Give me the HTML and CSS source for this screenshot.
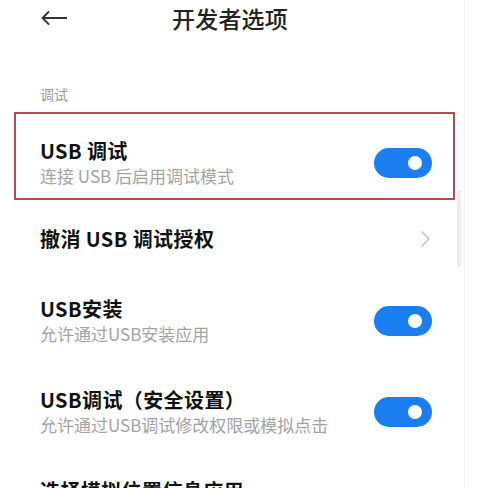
FILE: index.html
```html
<!DOCTYPE html>
<html lang="zh-CN">
<head>
<meta charset="utf-8">
<title>开发者选项</title>
<link rel="stylesheet" href="styles.css">
</head>
<body>
<div class="screen">
  <header class="topbar">
    <svg class="back" width="26" height="14" viewBox="0 0 26 14" aria-hidden="true">
      <path d="M1.5 7 H26 M7.5 1 L1.5 7 L7.5 13" fill="none" stroke="#333" stroke-width="1.8" stroke-linecap="round" stroke-linejoin="round"/>
    </svg>
    <h1 class="title">开发者选项</h1>
  </header>

  <div class="section-label">调试</div>

  <div class="item item-boxed">
    <div class="text">
      <div class="item-title">USB 调试</div>
      <div class="item-sub">连接 USB 后启用调试模式</div>
    </div>
    <div class="toggle"><span class="knob"></span></div>
  </div>

  <div class="item item-single">
    <div class="text">
      <div class="item-title">撤消 USB 调试授权</div>
    </div>
    <svg class="chevron" width="9" height="16" viewBox="0 0 9 16" aria-hidden="true">
      <path d="M1 1 L8 8 L1 15" fill="none" stroke="#bdbdbd" stroke-width="1.3" stroke-linecap="round" stroke-linejoin="round"/>
    </svg>
  </div>

  <div class="item">
    <div class="text">
      <div class="item-title">USB安装</div>
      <div class="item-sub">允许通过USB安装应用</div>
    </div>
    <div class="toggle"><span class="knob"></span></div>
  </div>

  <div class="item">
    <div class="text">
      <div class="item-title">USB调试（安全设置）</div>
      <div class="item-sub">允许通过USB调试修改权限或模拟点击</div>
    </div>
    <div class="toggle"><span class="knob"></span></div>
  </div>

  <div class="item">
    <div class="text">
      <div class="item-title">选择模拟位置信息应用</div>
    </div>
  </div>

  <div class="scrollbar"></div>
</div>
</body>
</html>
```

FILE: styles.css
```css
* { box-sizing: border-box; }

html, body {
  margin: 0;
  padding: 0;
  background: #ffffff;
}

body {
  font-family: "Noto Sans CJK SC", "Noto Sans", sans-serif;
  color: #111;
}

.screen {
  position: relative;
  width: 477px;
  height: 488px;
  overflow: hidden;
}

.screen::after {
  content: "";
  position: absolute;
  top: 0;
  bottom: 0;
  left: 464px;
  width: 1px;
  background: #f4f4f4;
}

.topbar {
  display: flex;
  align-items: center;
  height: 36px;
  padding-left: 41px;
}

.back {
  display: block;
  flex: none;
}

.title {
  margin: 0 0 0 105px;
  font-size: 23px;
  font-weight: 500;
  line-height: 36px;
  color: #222;
  letter-spacing: 0.2px;
}

.section-label {
  padding: 50px 0 0 40px;
  font-size: 14px;
  line-height: 16px;
  color: #9a9a9a;
}

.item {
  display: flex;
  align-items: center;
  justify-content: space-between;
  padding: 21px 45px 20px 40px;
}

.item-single {
  padding-bottom: 23px;
}

.item-boxed {
  margin: 10px 22px 5px 14px;
  border: 2px solid #b34a52;
  padding: 24px 21px 10px 24px;
}

.item-title {
  font-size: 20px;
  font-weight: 700;
  line-height: 26px;
  color: #111;
  letter-spacing: 0.4px;
}

.item-sub {
  font-size: 17px;
  line-height: 24px;
  color: #a3a3a3;
}

.toggle {
  position: relative;
  flex: none;
  width: 58px;
  height: 30px;
  border-radius: 15px;
  background: #1b7ef0;
}

.knob {
  position: absolute;
  top: 8px;
  right: 10px;
  width: 14px;
  height: 14px;
  border-radius: 50%;
  background: #ffffff;
}

.chevron {
  display: block;
  flex: none;
  margin-right: 2px;
}

.scrollbar {
  position: absolute;
  left: 457px;
  top: 190px;
  width: 4px;
  height: 77px;
  border-radius: 2px;
  background: #ececec;
}
```
